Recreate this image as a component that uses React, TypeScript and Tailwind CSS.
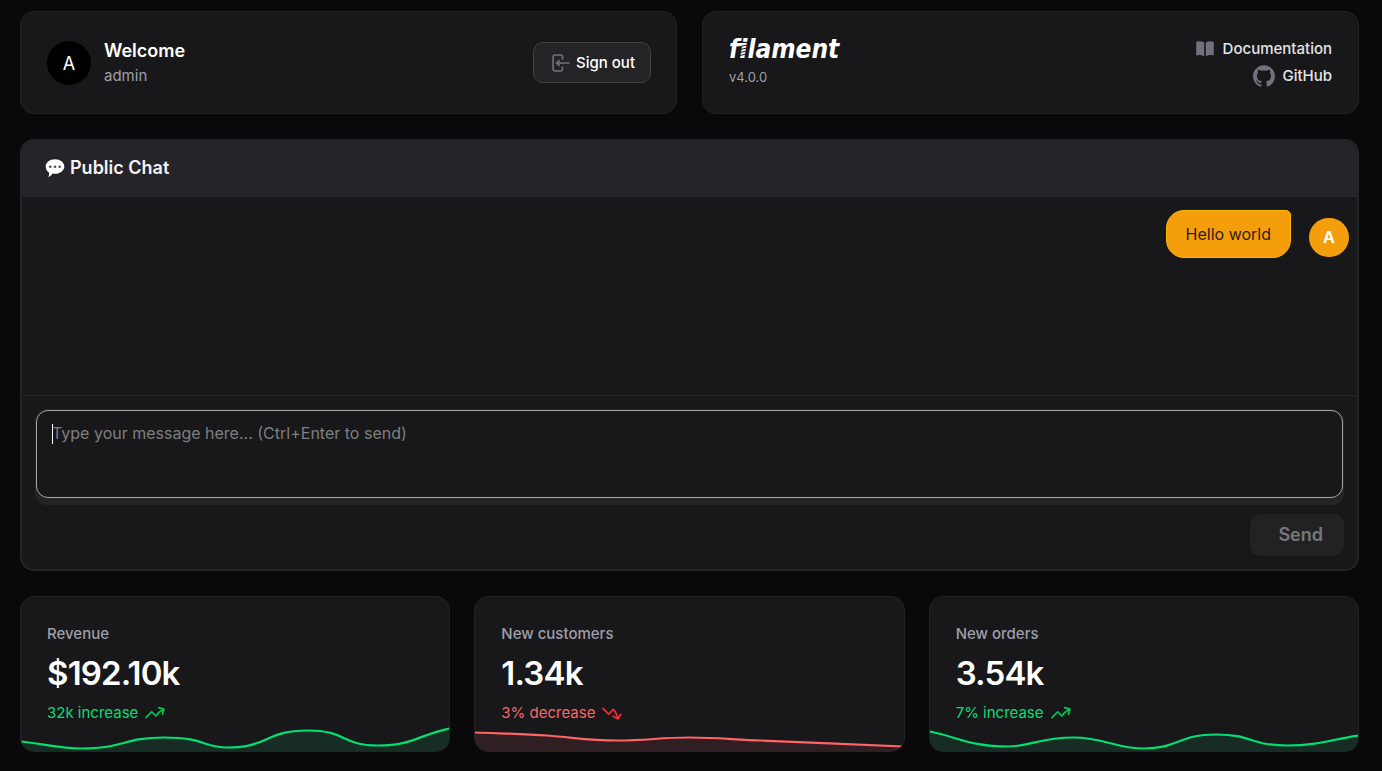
import type { ReactNode } from "react";
import { HiMiniBookOpen, HiMiniArrowTrendingUp, HiMiniArrowTrendingDown } from "react-icons/hi2";
import { SiGithub } from "react-icons/si";

const card = "rounded-[14px] border border-[#232325] bg-[#18181b]";

function SignOutIcon() {
  return (
    <svg viewBox="0 0 20 20" fill="currentColor" className="size-[22px] text-[#71717b]" aria-hidden="true">
      <path
        fillRule="evenodd"
        clipRule="evenodd"
        d="M3 4.25A2.25 2.25 0 0 1 5.25 2h5.5A2.25 2.25 0 0 1 13 4.25v2a.75.75 0 0 1-1.5 0v-2a.75.75 0 0 0-.75-.75h-5.5a.75.75 0 0 0-.75.75v11.5c0 .414.336.75.75.75h5.5a.75.75 0 0 0 .75-.75v-2a.75.75 0 0 1 1.5 0v2A2.25 2.25 0 0 1 10.75 18h-5.5A2.25 2.25 0 0 1 3 15.75V4.25Z"
      />
      <path
        fillRule="evenodd"
        clipRule="evenodd"
        d="M19 10a.75.75 0 0 0-.75-.75H8.704l1.048-.943a.75.75 0 1 0-1.004-1.114l-2.5 2.25a.75.75 0 0 0 0 1.114l2.5 2.25a.75.75 0 1 0 1.004-1.114l-1.048-.943h9.546A.75.75 0 0 0 19 10Z"
      />
    </svg>
  );
}

function SpeechBubble() {
  return (
    <svg viewBox="0 0 20 20" className="size-5" aria-hidden="true">
      <path d="M10 1.200c5.200 0 9.300 3.200 9.300 7.300s-4.100 7.300-9.300 7.300c-.9 0-1.700-.1-2.500-.300C6.500 17.200 5 18.600 3.300 19c.7-1.200.9-2.700.7-4.400C2 13.300.7 11 .7 8.500c0-4.100 4.100-7.300 9.300-7.300Z" fill="#fff" />
      <circle cx="5.300" cy="8.700" r="1.300" fill="#46545e" />
      <circle cx="10" cy="8.700" r="1.300" fill="#46545e" />
      <circle cx="14.700" cy="8.700" r="1.300" fill="#46545e" />
    </svg>
  );
}

function Wordmark() {
  return (
    <div className="relative w-fit font-['DejaVu_Sans_Condensed','DejaVu_Sans',sans-serif] text-[26px] leading-7 font-bold text-white italic">
      filament
      <svg viewBox="0 0 8 16" className="absolute top-[8px] left-[11px] h-4 w-2" aria-hidden="true">
        <path d="M0 3.500 7 2M0 6.500 7 5M0 9.500 7 8M0 12.500 6 11" stroke="#18181b" strokeWidth="1" />
      </svg>
    </div>
  );
}

type Stat = {
  label: string;
  value: string;
  note: string;
  up: boolean;
  line: string;
};

const stats: Stat[] = [
  {
    label: "Revenue",
    value: "$192.10k",
    note: "32k increase",
    up: true,
    line: "M0 14C20 16 41 21 61 21C102 21 103 10 143 10C184 10 182 20 206 20C248 20 244 3 286 3C327 3 319 18 357 18C392 18 398 7 428 1",
  },
  {
    label: "New customers",
    value: "1.34k",
    note: "3% decrease",
    up: false,
    line: "M0 5C24 6 48 6 72 8C100 10 112 13 143 13C172 13 185 10 214 10C243 10 257 12 286 13C330 15 385 17 428 19",
  },
  {
    label: "New orders",
    value: "3.54k",
    note: "7% increase",
    up: true,
    line: "M0 4C29 10 40 19 78 19C100 19 110 10 143 10C175 10 185 21 214 21C248 21 248 7 286 7C322 7 320 18 357 18C390 18 399 12 428 8",
  },
];

function StatCard({ label, value, note, up, line }: Stat) {
  const Trend = up ? HiMiniArrowTrendingUp : HiMiniArrowTrendingDown;
  return (
    <section className={`${card} flex h-[156px] flex-col justify-between overflow-hidden`}>
      <div className="px-[26px] pt-[26px]">
        <h3 className="text-[15px] leading-[22px] font-medium text-[#9f9fa9]">{label}</h3>
        <p className="mt-2 text-[33px] leading-10 font-semibold tracking-tight text-white">{value}</p>
        <p className={`mt-[9px] flex items-center gap-[6px] text-[15px] leading-[22px] ${up ? "text-[#05df72]" : "text-[#ff6467]"}`}>
          {note}
          <Trend className={`size-[22px] ${up ? "text-[#00c950]" : "text-[#fb2c36]"}`} />
        </p>
      </div>
      <svg viewBox="0 -0.5 428 24" preserveAspectRatio="none" className="h-6 w-full shrink-0 overflow-visible" aria-hidden="true">
        <path d={`${line}V25H0Z`} fill={up ? "#05df72" : "#ff6467"} fillOpacity="0.1" />
        <path d={line} fill="none" stroke={up ? "#05df72" : "#ff6467"} strokeWidth="2.2" />
      </svg>
    </section>
  );
}

function InfoLink({ href, icon, children }: { href: string; icon: ReactNode; children: ReactNode }) {
  return (
    <a href={href} className="flex items-center gap-[7px] text-[15px] leading-[22px] font-medium text-[#e4e4e7]">
      {icon}
      {children}
    </a>
  );
}

export default function App() {
  return (
    <main className="flex min-h-screen flex-col gap-[25px] bg-[#09090b] pt-[11px] pr-[23px] pb-[19px] pl-5 font-['Inter',sans-serif]">
      <div className="grid grid-cols-2 gap-[25px]">
        <section className={`${card} flex h-[103px] items-center gap-[13px] pr-[25px] pl-[26px]`}>
          <div className="flex size-11 items-center justify-center rounded-full bg-black pt-[2px] text-lg text-white">A</div>
          <div className="flex-1 pt-[2px]">
            <h2 className="text-lg leading-6 font-semibold text-white">Welcome</h2>
            <p className="text-[15px] leading-[26px] text-[#9f9fa9]">admin</p>
          </div>
          <button type="button" className="flex h-[41px] items-center gap-[5px] rounded-[10px] border border-[#424245] bg-[#242427] px-[15px] text-[15px] leading-6 font-medium text-white">
            <SignOutIcon />
            Sign out
          </button>
        </section>
        <section className={`${card} flex h-[103px] items-center justify-between px-[26px]`}>
          <div className="pb-[3px]">
            <Wordmark />
            <p className="mt-1 text-[13px] leading-5 text-[#9f9fa9]">v4.0.0</p>
          </div>
          <nav className="flex flex-col items-end gap-[5px]">
            <InfoLink href="#documentation" icon={<HiMiniBookOpen className="size-[22px] text-[#71717b]" />}>
              Documentation
            </InfoLink>
            <InfoLink href="#github" icon={<SiGithub className="size-[22px] text-[#71717b]" />}>
              GitHub
            </InfoLink>
          </nav>
        </section>
      </div>

      <section className="overflow-hidden rounded-[14px] border-2 border-[#242427] bg-[#18181b]">
        <header className="flex h-14 items-center gap-[5px] border-b border-[#27272a] bg-[#242429] px-[23px] pb-[2px]">
          <SpeechBubble />
          <h2 className="text-lg font-semibold text-[#f4f4f5]">Public Chat</h2>
        </header>
        <div className="flex h-[198px] items-start justify-end gap-[18px] px-2 pt-[13px]">
          <p className="rounded-[18px] rounded-tr-[5px] border border-[#ffb900] bg-[#f59e0b] px-[19px] py-[11px] text-base leading-6 text-[#2b2112]">
            Hello world
          </p>
          <div className="mt-2 flex h-[39px] w-10 items-center justify-center rounded-full bg-[#f59e0b] pb-px text-base font-bold text-white">A</div>
        </div>
        <form className="flex flex-col items-end border-t border-[#27272a] p-[13px]">
          <div className="relative w-full rounded-xl bg-[#242427] p-px pb-[7px]">
            <textarea
              aria-label="Message"
              placeholder="Type your message here... (Ctrl+Enter to send)"
              className="block h-[88px] w-full resize-none rounded-xl border border-[#a6a6a8] bg-[#18181b] px-[15px] py-[10px] text-base leading-6 text-white caret-transparent outline-none placeholder:text-[#7f7f80]"
            />
            <span className="absolute top-[15px] left-[17px] h-5 w-px bg-white" />
          </div>
          <button type="button" disabled className="mt-[9px] h-[42px] rounded-[10px] bg-[#222224] pr-[21px] pl-7 text-lg font-semibold text-[#78787a] shadow-sm">
            Send
          </button>
        </form>
      </section>

      <div className="grid grid-cols-3 gap-6">
        {stats.map((stat) => (
          <StatCard key={stat.label} {...stat} />
        ))}
      </div>
    </main>
  );
}
